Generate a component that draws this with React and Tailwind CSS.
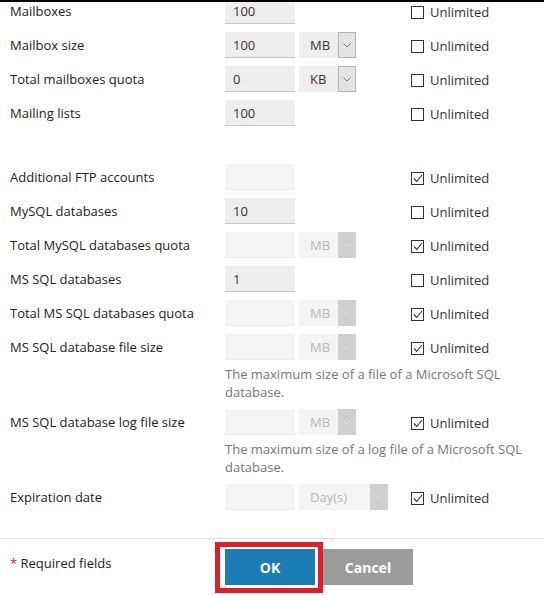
const groups = [
  [
    { label: "Mailboxes", value: "100" },
    { label: "Mailbox size", value: "100", unit: "MB" },
    { label: "Total mailboxes quota", value: "0", unit: "KB" },
    { label: "Mailing lists", value: "100" },
  ],
  [
    { label: "Additional FTP accounts", value: "", checked: true, off: true },
    { label: "MySQL databases", value: "10" },
    { label: "Total MySQL databases quota", value: "", unit: "MB", checked: true, off: true },
    { label: "MS SQL databases", value: "1" },
    { label: "Total MS SQL databases quota", value: "", unit: "MB", checked: true, off: true },
    {
      label: "MS SQL database file size",
      value: "",
      unit: "MB",
      checked: true,
      off: true,
      hint: "The maximum size of a file of a Microsoft SQL database.",
    },
    {
      label: "MS SQL database log file size",
      value: "",
      unit: "MB",
      checked: true,
      off: true,
      hint: "The maximum size of a log file of a Microsoft SQL database.",
    },
    { label: "Expiration date", value: "", unit: "Day(s)", checked: true, off: true, wide: true },
  ],
];

function Chevron({ off }) {
  return (
    <svg width="8" height="5" viewBox="0 0 8 5" fill="none">
      <polyline
        points="0.5,0.5 4,4 7.5,0.5"
        stroke={off ? "#e6e6e6" : "#777"}
        strokeWidth="1"
      />
    </svg>
  );
}

function Select({ unit, off, wide }) {
  return (
    <div className={`flex h-[26px] ${wide ? "w-[89px]" : "w-[57px]"}`}>
      <div
        className={`flex-1 pl-[11px] leading-[26px] ${
          off ? "bg-[#f4f4f4] text-[#b8b8b8]" : "bg-[#eeeeee] text-[#333]"
        }`}
      >
        {unit}
      </div>
      <div
        className={`w-[18px] flex items-center justify-center ${
          off ? "bg-[#cfcfcf]" : "bg-[#e4e4e4] border border-[#b5b5b5]"
        }`}
      >
        <Chevron off={off} />
      </div>
    </div>
  );
}

function Check({ checked }) {
  return (
    <div className="flex items-center gap-[6px] h-[26px] pt-[3px]">
      <div className="w-[13px] h-[13px] border border-[#333] bg-white flex items-center justify-center">
        {checked && (
          <svg width="10" height="9" viewBox="0 0 10 9" fill="none">
            <polyline points="1,4.5 3.8,7.5 9,1" stroke="#333" strokeWidth="1.1" />
          </svg>
        )}
      </div>
      <span className="text-[#333]">Unlimited</span>
    </div>
  );
}

function Row({ row }) {
  return (
    <div className="grid grid-cols-[215px_186px_1fr]">
      <div className="leading-[26px] text-[#222]">{row.label}</div>
      <div className="flex gap-1">
        <div
          className={`w-[70px] h-[26px] pl-2 leading-[26px] border-b ${
            row.off
              ? "bg-[#f4f4f4] border-[#ececec]"
              : "bg-[#eeeeee] border-[#c4c4c4] text-[#333]"
          }`}
        >
          {row.value}
        </div>
        {row.unit && <Select unit={row.unit} off={row.off} wide={row.wide} />}
      </div>
      <Check checked={row.checked} />
      {row.hint && (
        <div className="col-start-2 col-span-2 w-[300px] mt-[5px] leading-[18px] text-[#777]">
          {row.hint}
        </div>
      )}
    </div>
  );
}

export default function App() {
  return (
    <div
      className="w-[544px] h-[595px] overflow-hidden bg-white text-[13px]"
      style={{ fontFamily: '"Open Sans", "Noto Sans", sans-serif' }}
    >
      <div className="relative z-10 h-[2px] bg-black" />
      <div className="-mt-[4px] px-[10px] flex flex-col">
        <div className="flex flex-col gap-2">
          {groups[0].map((r) => (
            <Row key={r.label} row={r} />
          ))}
        </div>
        <div className="flex flex-col gap-2 mt-[38px]">
          {groups[1].map((r) => (
            <Row key={r.label} row={r} />
          ))}
        </div>
      </div>
      <div className="mt-[28px] border-t border-[#dddddd]" />
      <div className="px-[10px] pt-[10px] grid grid-cols-[215px_1fr]">
        <div className="pt-[4px] leading-[20px] text-[#222]">
          <span className="text-[#c0282d]">*</span> Required fields
        </div>
        <div className="flex gap-2">
          <div className="relative">
            <button className="w-[90px] h-[36px] bg-[#1a7cb3] text-white font-bold text-[14px]">
              OK
            </button>
            <div className="absolute -left-[10px] -top-[7px] -right-[8px] -bottom-[8px] border-[5px] border-[#dc1f2a]" />
          </div>
          <button className="w-[90px] h-[36px] bg-[#9b9b9b] text-white font-bold text-[14px]">
            Cancel
          </button>
        </div>
      </div>
    </div>
  );
}
